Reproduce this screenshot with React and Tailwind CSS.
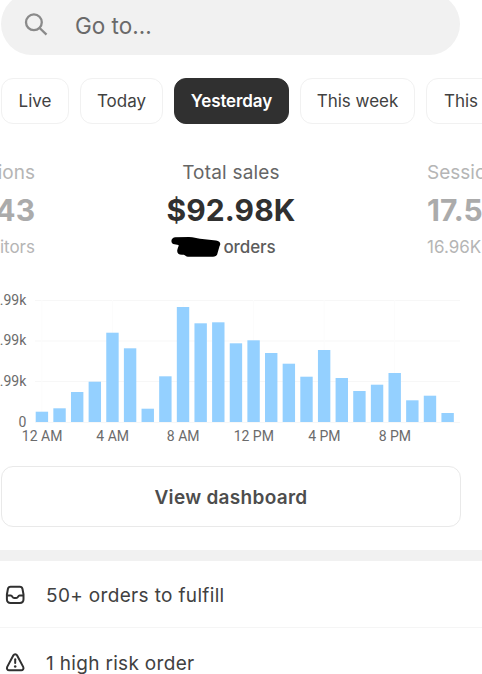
const ranges = [
  { label: "Live", className: "w-[68px]" },
  { label: "Today", className: "w-[83px]" },
  { label: "Yesterday", active: true, className: "w-[115px] tracking-[-0.1px]" },
  { label: "This week", className: "w-[115px]" },
  { label: "This", className: "w-[70px]" },
];

// bar heights in chart units, one per hour starting at 12 AM
const hourly = [
  10.3, 13.7, 30, 40.3, 89.3, 73.7, 13.3, 45.7, 115, 98.7, 99.7, 78.7,
  81.7, 69, 58.3, 45.3, 72, 44, 31, 37.3, 49, 21.7, 26.3, 9,
];

const PITCH = 17.64;
const BAR_WIDTH = 12.4;
const LEFT = 35.7;
const BASE = 132;

const xLabels = ["12 AM", "4 AM", "8 AM", "12 PM", "4 PM", "8 PM"];
const yLabels = [
  { text: ".99k", y: 10 },
  { text: ".99k", y: 50.5 },
  { text: ".99k", y: 91 },
  { text: "0", y: BASE },
];

function SearchBar() {
  return (
    <div className="ml-px -mt-[7px] flex h-[62px] w-[459px] shrink-0 items-center rounded-full bg-[#f1f1f1]">
      <svg className="ml-[23px] mt-0.5 h-6 w-6 shrink-0" viewBox="0 0 24 24" fill="none" stroke="#8a8a8a" strokeWidth="2.3">
        <circle cx="9.9" cy="9.3" r="7.9" />
        <path d="M15.6 15 L22.5 21.6" />
      </svg>
      <span className="ml-[27px] mt-[3px] text-[22.5px] leading-7 text-[#6a6a6a]">Go to...</span>
    </div>
  );
}

function RangeTabs() {
  return (
    <div className="mt-[23px] ml-px flex h-[46px] shrink-0 gap-[11px]">
      {ranges.map((r) => (
        <button
          key={r.label}
          className={`h-[46px] shrink-0 rounded-xl border pt-px text-[17px] ${r.className} ${
            r.active
              ? "border-[#303030] bg-[#303030] font-semibold text-white"
              : "border-[#f1f1f1] bg-white text-[#414141]"
          }`}
        >
          {r.label}
        </button>
      ))}
    </div>
  );
}

function Metrics() {
  return (
    <div className="mt-[35px] flex h-[105px] shrink-0 justify-between whitespace-nowrap">
      <div className="flex w-[35px] flex-col items-end text-[#b5b5b5]">
        <span className="text-[19px] leading-7">ions</span>
        <span className="mt-[7px] text-[30px] leading-8 font-bold text-[#ababab]">43</span>
        <span className="mt-[9px] text-[17px] leading-6">itors</span>
      </div>
      <div className="flex w-[140px] flex-col items-center">
        <span className="text-[19px] leading-7 tracking-[0.2px] text-[#666]">Total sales</span>
        <span className="mt-[7px] text-[30px] leading-8 font-bold tracking-[0.1px] text-[#303030]">$92.98K</span>
        <div className="mt-[9px] mr-[15px] flex h-6 items-center gap-0.5">
          <svg className="h-5 w-[50px]" viewBox="0 0 50 20">
            <path
              d="M4 0.2 L18 0 C23 0.2 25 1.3 29 1.7 L45 3.5 C49 4 50.3 6.5 48.5 9.2 L46.5 16.2 C46 18.7 44.5 19.7 42 19.7 L17 19.7 C15 19.7 14 17.7 12 17.7 C7 18.2 5.5 15.2 6.5 12.2 C7 10.2 8 9.2 7.5 7.9 L3.5 7.3 C-0.7 6.7 -0.7 1 4 0.2 Z"
              fill="#000"
            />
          </svg>
          <span className="text-[17px] leading-6 font-medium tracking-[-0.1px] text-[#5c5c5c]">orders</span>
        </div>
      </div>
      <div className="flex w-[55px] flex-col items-start text-[#b5b5b5]">
        <span className="text-[19px] leading-7">Sessions</span>
        <span className="mt-[7px] text-[30px] leading-8 font-bold text-[#ababab]">17.5</span>
        <span className="mt-[9px] text-[17px] leading-6">16.96K</span>
      </div>
    </div>
  );
}

function SalesChart() {
  return (
    <svg className="mt-[26px] block h-[160px] w-[482px] shrink-0" viewBox="0 0 482 160">
      {yLabels.map((l) => (
        <path key={l.y} d={`M35 ${l.y + 0.5} H460`} stroke="#f7f7f7" />
      ))}
      {xLabels.map((l, i) => (
        <path key={l} d={`M${LEFT + BAR_WIDTH / 2 + i * PITCH * 4} 10 V132`} stroke="#fcfcfc" />
      ))}
      {hourly.map((h, i) => (
        <rect key={i} x={LEFT + i * PITCH} y={BASE - h} width={BAR_WIDTH} height={h} fill="#94d0ff" />
      ))}
      <g fontFamily="Roboto, sans-serif" fontSize="14" fill="#6b6b6b">
        {yLabels.map((l) => (
          <text key={l.y} x="26.3" y={l.y + 4.6} textAnchor="end">{l.text}</text>
        ))}
        {xLabels.map((l, i) => (
          <text key={l} x={LEFT + BAR_WIDTH / 2 + i * PITCH * 4 + 0.2} y="151" textAnchor="middle">{l}</text>
        ))}
      </g>
    </svg>
  );
}

function InboxIcon() {
  return (
    <svg className="mt-px h-5 w-5 shrink-0" viewBox="0 0 20 20" fill="none" stroke="#303030" strokeWidth="2" strokeLinejoin="round">
      <path d="M5.6 1.7 H14.8 C16.4 1.7 17.2 2.5 17.5 4 L18.5 9.5 V14.2 C18.5 16.6 17.2 17.9 14.8 17.9 H5.6 C3.2 17.9 1.9 16.6 1.9 14.2 V9.5 L2.9 4 C3.2 2.5 4 1.7 5.6 1.7 Z" />
      <path d="M2 10.5 H5.8 C6.7 10.5 7.1 11.2 7.5 11.9 C7.9 12.7 8.4 13 9.2 13 H11.2 C12 13 12.5 12.7 12.9 11.9 C13.3 11.2 13.7 10.5 14.6 10.5 H18.4" />
    </svg>
  );
}

function AlertIcon() {
  return (
    <svg className="h-5 w-5 shrink-0" viewBox="0 0 20 20" fill="none" stroke="#303030" strokeWidth="2" strokeLinejoin="round" strokeLinecap="round">
      <path d="M8.4 2.2 C9.2 0.8 11.2 0.8 12 2.2 L18.2 13.9 C19 15.5 18 17.3 16.2 17.3 H4.2 C2.4 17.3 1.4 15.5 2.2 13.9 Z" />
      <path d="M10.2 6.2 V10.1" />
      <circle cx="10.2" cy="13.6" r="1.25" fill="#303030" stroke="none" />
    </svg>
  );
}

export default function App() {
  return (
    <div className="flex h-[674px] w-[482px] flex-col overflow-hidden bg-white font-['Inter',sans-serif]">
      <SearchBar />
      <RangeTabs />
      <Metrics />
      <SalesChart />

      <button className="mt-4 ml-px h-[61px] w-[460px] shrink-0 rounded-xl border border-[#e9e9e9] pt-[3px] text-[19px] font-semibold tracking-[0.3px] text-[#4d4d4d]">
        View dashboard
      </button>

      <div className="mt-[23px] h-[11px] shrink-0 bg-[#f1f1f1]" />

      {/* Task list */}
      <div className="flex h-[67px] shrink-0 items-center gap-[21px] border-b border-[#f5f5f5] pl-[5px]">
        <InboxIcon />
        <span className="mt-[3px] text-[19px] leading-7 tracking-[0.34px] text-[#414141]">50+ orders to fulfill</span>
      </div>
      <div className="flex h-[69px] shrink-0 items-center gap-[21px] pl-[5px]">
        <AlertIcon />
        <span className="mt-[3px] text-[19px] leading-7 tracking-[0.32px] text-[#414141]">1 high risk order</span>
      </div>
    </div>
  );
}
